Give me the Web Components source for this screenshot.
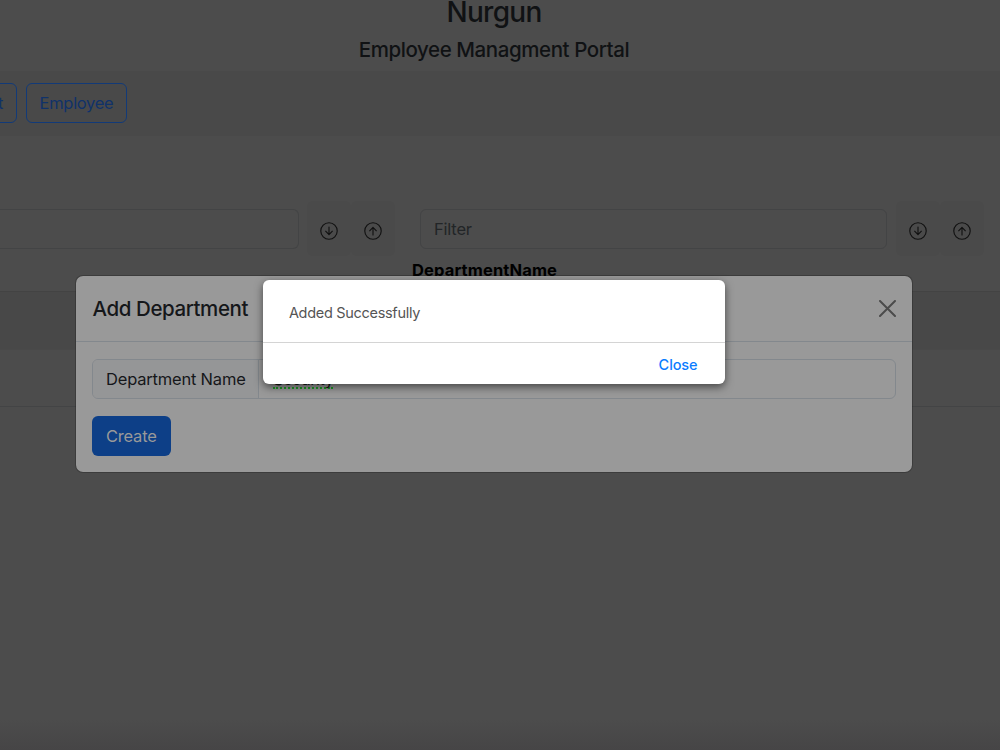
<!DOCTYPE html>
<html lang="en">
<head>
<meta charset="utf-8">
<title>Nurgun</title>
<style>
    html, body{
        margin: 0;
        height: 100%;
        overflow: hidden;
        background-color: #4c4c4c;
    }
    body{
        font-family: Inter, "Liberation Sans", sans-serif;
        font-size: 16.5px;
        color: #101214;
    }
</style>
</head>
<body>
<portal-page>
    <portal-header main="Nurgun" sub="Employee Managment Portal"></portal-header>
    <nav-bar>
        <nav-button>Department</nav-button>
        <nav-button>Employee</nav-button>
    </nav-bar>
    <department-table></department-table>
</portal-page>
<modal-dialog main="Add Department">
    <field-group label="Department Name" value="Security"></field-group>
    <create-button>Create</create-button>
</modal-dialog>
<snack-bar message="Added Successfully" action="Close"></snack-bar>

<script>
class BaseComponent extends HTMLElement{
    render(html){
        const template = document.createElement('template');
        template.innerHTML = html;
        this.attachShadow({mode: 'open'});
        this.shadowRoot.appendChild(template.content.cloneNode(true));
    }
}

class PortalPageComponent extends BaseComponent{
    constructor(){
        super()
        this.render(`
        <style>
            :host{
                display: flex;
                flex-direction: column;
                height: 100vh;
                background: linear-gradient(#4c4c4c, #4c4c4c 96%, #464546 100%);
            }
        </style>
        <slot></slot>
        `);
    }
}

class PortalHeaderComponent extends BaseComponent{
    constructor(){
        super()
        this.render(`
        <style>
            :host{
                display: flex;
                flex-direction: column;
                align-items: center;
                gap: 12px;
                height: 71px;
                padding-right: 12px;
                box-sizing: border-box;
            }
            h3, h5{
                margin: 0;
                font-weight: 500;
                white-space: nowrap;
            }
            h3{
                font-size: 28px;
                line-height: 24px;
                letter-spacing: -.7px;
            }
            h5{
                font-size: 20.5px;
                line-height: 27px;
                letter-spacing: -.42px;
            }
        </style>
        <h3>${this.getAttribute('main')}</h3>
        <h5>${this.getAttribute('sub')}</h5>
        `);
    }
}

class NavBarComponent extends BaseComponent{
    constructor(){
        super()
        this.render(`
        <style>
            :host{
                display: flex;
                gap: 9px;
                height: 65px;
                padding: 12px 0;
                margin-left: -103px;
                box-sizing: border-box;
                background-color: #494949;
            }
        </style>
        <slot></slot>
        `);
    }
}

class NavButtonComponent extends BaseComponent{
    constructor(){
        super()
        this.render(`
        <style>
            :host{
                display: block;
            }
            :host(:first-child) button{
                width: 120px;
                padding-left: 3px;
            }
            button{
                width: 101px;
                height: 40px;
                padding: 0;
                border: 1px solid #123a78;
                border-radius: 6px;
                background: none;
                font: inherit;
                letter-spacing: -.3px;
                color: #10326a;
            }
        </style>
        <button><slot></slot></button>
        `);
    }
}

class SortButtonComponent extends BaseComponent{
    constructor(){
        super()
        const arrow = this.getAttribute('dir') === 'down'
            ? 'M8 4.5v6.6M5 8.2l3 3 3-3'
            : 'M8 11.5V4.9M5 7.8l3-3 3 3';
        this.render(`
        <style>
            :host{
                display: block;
            }
            button{
                display: flex;
                justify-content: center;
                width: 44px;
                height: 55px;
                padding: 21px 0 0;
                border: none;
                border-radius: 6px;
                background-color: #4a4a4a;
                color: #101010;
            }
        </style>
        <button>
            <svg width="18" height="18" viewBox="0 0 16 16" fill="none" stroke="currentColor" stroke-linecap="round" stroke-linejoin="round">
                <circle cx="8" cy="8" r="7.3"/>
                <path d="${arrow}"/>
            </svg>
        </button>
        `);
    }
}

class DepartmentTableComponent extends BaseComponent{
    constructor(){
        super()
        this.render(`
        <style>
            :host{
                display: block;
                padding-top: 65px;
            }
            .filters{
                display: grid;
                grid-template-columns: 395.4px 564px;
                column-gap: 24.6px;
                height: 55px;
            }
            .filter-cont{
                display: flex;
                align-items: flex-start;
            }
            input{
                flex: 1;
                min-width: 0;
                height: 40px;
                margin: 8px 8.5px 0 0;
                padding: 0 13px;
                box-sizing: border-box;
                border: 1px solid #434445;
                border-radius: 6px;
                background-color: #4c4c4c;
                font: inherit;
                letter-spacing: -.2px;
            }
            .first input{
                border-left: none;
                border-radius: 0 6px 6px 0;
            }
            input::placeholder{
                color: #222527;
                opacity: 1;
            }
            .head{
                height: 36px;
                padding-left: 412px;
                box-sizing: border-box;
                border-bottom: 1px solid #434343;
                font-weight: 700;
                font-size: 16.5px;
                line-height: 28px;
                letter-spacing: .13px;
                color: #000;
            }
            .row{
                height: 57px;
                box-sizing: border-box;
                border-bottom: 1px solid #434445;
            }
            .odd{
                height: 58px;
                border-bottom-color: #494949;
                background-color: #484848;
            }
        </style>
        <div class='filters'>
            <div class='filter-cont first'>
                <input>
                <sort-button dir='down'></sort-button>
                <sort-button dir='up'></sort-button>
            </div>
            <div class='filter-cont'>
                <input placeholder='Filter'>
                <sort-button dir='down'></sort-button>
                <sort-button dir='up'></sort-button>
            </div>
        </div>
        <div class='head'>DepartmentName</div>
        <div class='row odd'></div>
        <div class='row'></div>
        `);
    }
}

class ModalDialogComponent extends BaseComponent{
    constructor(){
        super()
        this.render(`
        <style>
            :host{
                position: absolute;
                top: 275px;
                left: 75px;
                width: 838px;
                height: 198px;
                box-sizing: border-box;
                border: 1px solid rgba(0,0,0,.2);
                border-radius: 8px;
                background-color: #999;
                background-clip: padding-box;
            }
            .header{
                display: flex;
                justify-content: space-between;
                align-items: center;
                height: 65px;
                padding: 0 16px 0 16.5px;
                border-bottom: 1px solid #83888d;
            }
            h5{
                margin: 0;
                font-size: 20.5px;
                font-weight: 500;
                letter-spacing: -.42px;
                color: #15171a;
            }
            .body{
                display: flex;
                flex-direction: column;
                gap: 17px;
                padding: 17px 16px 0;
            }
            svg{
                display: block;
            }
        </style>
        <div class='header'>
            <h5>${this.getAttribute('main')}</h5>
            <svg width="17" height="17" viewBox="0 0 17 17" stroke="#4b4b4b" stroke-width="2" stroke-linecap="round">
                <path d="M1 1l15 15M16 1L1 16"/>
            </svg>
        </div>
        <div class='body'><slot></slot></div>
        `);
    }
}

class FieldGroupComponent extends BaseComponent{
    constructor(){
        super()
        this.render(`
        <style>
            :host{
                display: flex;
                height: 40px;
                box-sizing: border-box;
                border: 1px solid #83888d;
                border-radius: 6px;
                letter-spacing: -.2px;
                line-height: 38px;
                color: #15171a;
            }
            .label{
                width: 166px;
                box-sizing: border-box;
                padding-left: 13px;
                border-right: 1px solid #83888d;
                border-radius: 5px 0 0 5px;
                background-color: #959697;
                white-space: nowrap;
            }
            .value{
                padding-left: 14px;
            }
            .value span{
                display: block;
                height: 29px;
                box-sizing: border-box;
                border-bottom: 2px dotted #1c9a26;
                letter-spacing: -.55px;
            }
        </style>
        <div class='label'>${this.getAttribute('label')}</div>
        <div class='value'><span>${this.getAttribute('value')}</span></div>
        `);
    }
}

class CreateButtonComponent extends BaseComponent{
    constructor(){
        super()
        this.render(`
        <style>
            :host{
                display: block;
            }
            button{
                width: 78.5px;
                height: 40px;
                padding: 0;
                border: none;
                border-radius: 6px;
                background-color: #0d3f87;
                font: inherit;
                letter-spacing: -.2px;
                color: #999;
            }
        </style>
        <button><slot></slot></button>
        `);
    }
}

class SnackBarComponent extends BaseComponent{
    constructor(){
        super()
        this.render(`
        <style>
            :host{
                position: absolute;
                top: 280px;
                left: 263.4px;
                width: 461.6px;
                height: 104px;
                border-radius: 6px;
                background-color: white;
                font-size: 14.5px;
                box-shadow: 0 3px 8px rgba(0,0,0,.55);
            }
            .message{
                height: 63px;
                padding: 4px 25.5px 0;
                box-sizing: border-box;
                border-bottom: 1px solid #d4d4d4;
                line-height: 58px;
                letter-spacing: -.3px;
                color: #555;
            }
            .footer{
                display: flex;
                justify-content: flex-end;
                padding-right: 27.5px;
            }
            button{
                height: 42px;
                padding: 0;
                border: none;
                background: none;
                font: inherit;
                font-weight: 500;
                letter-spacing: -.1px;
                color: #0a7cff;
            }
        </style>
        <div class='message'>${this.getAttribute('message')}</div>
        <div class='footer'><button>${this.getAttribute('action')}</button></div>
        `);
    }
}

window.customElements.define('portal-page', PortalPageComponent);
window.customElements.define('portal-header', PortalHeaderComponent);
window.customElements.define('nav-bar', NavBarComponent);
window.customElements.define('nav-button', NavButtonComponent);
window.customElements.define('sort-button', SortButtonComponent);
window.customElements.define('department-table', DepartmentTableComponent);
window.customElements.define('modal-dialog', ModalDialogComponent);
window.customElements.define('field-group', FieldGroupComponent);
window.customElements.define('create-button', CreateButtonComponent);
window.customElements.define('snack-bar', SnackBarComponent);
</script>
</body>
</html>
